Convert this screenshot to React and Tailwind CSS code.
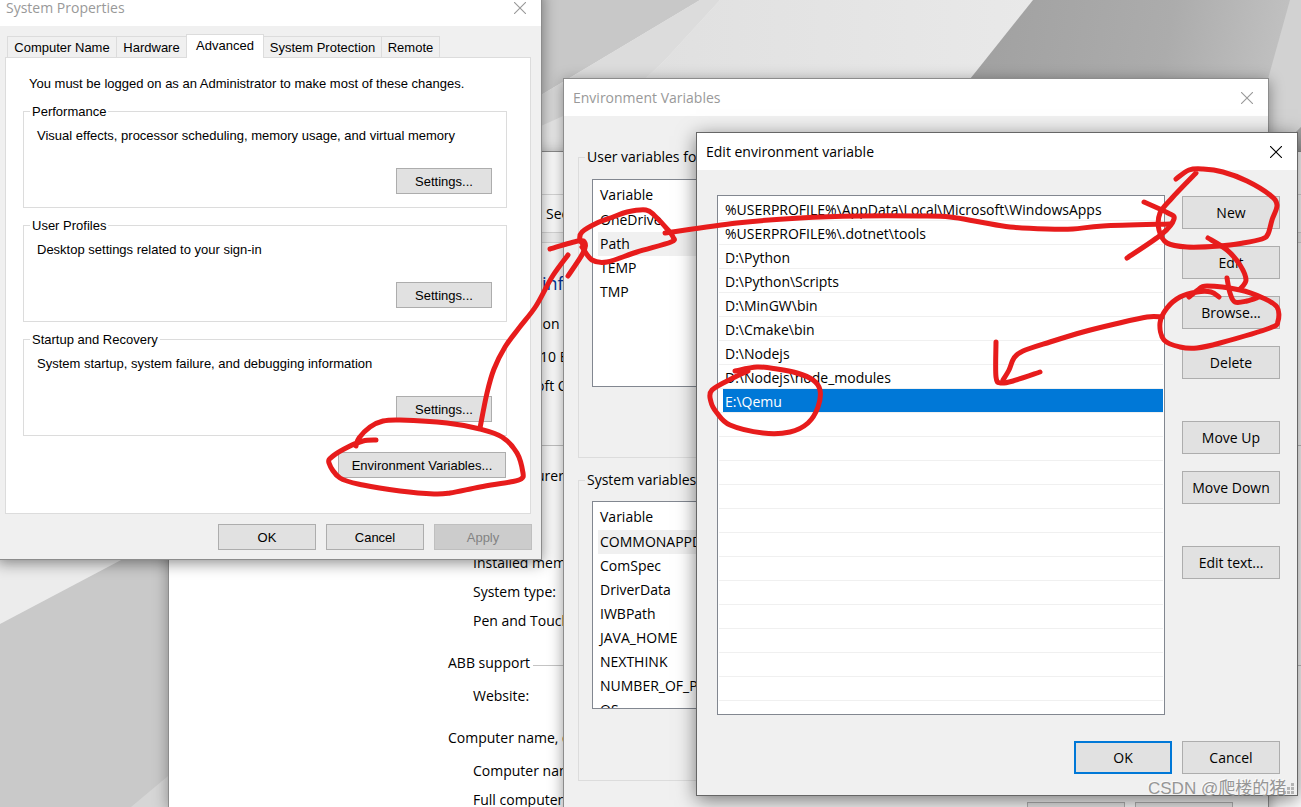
import React from "react";

const SEGOE = "font-['Open_Sans','Noto_Sans_CJK_SC',sans-serif] text-[14px]";

function smooth(points) {
  let d = `M${points[0][0]} ${points[0][1]}`;
  for (let i = 0; i < points.length - 1; i++) {
    const a = points[i - 1] || points[i];
    const b = points[i];
    const c = points[i + 1];
    const e = points[i + 2] || c;
    d += `C${b[0] + (c[0] - a[0]) / 6} ${b[1] + (c[1] - a[1]) / 6} ${c[0] - (e[0] - b[0]) / 6} ${c[1] - (e[1] - b[1]) / 6} ${c[0]} ${c[1]}`;
  }
  return d;
}

const strokes = [
  [[376, 440], [363, 441], [348, 447], [333, 456], [329, 463], [340, 478], [363, 485], [400, 491], [434, 494], [450, 493], [480, 487], [510, 482], [521, 479], [523, 473], [517, 453], [502, 437], [480, 429], [447, 423], [400, 420], [383, 421], [370, 427], [359, 438], [356, 446]],
  [[480, 428], [487, 393], [494, 369], [505, 347], [519, 328], [536, 306], [552, 277], [568, 255]],
  [[550, 249], [578, 241], [585, 243], [583, 253], [568, 276]],
  [[585, 246], [580, 240], [582, 232], [597, 223], [613, 217], [627, 212], [646, 210], [655, 216], [668, 230], [673, 237], [671, 242], [637, 252], [607, 262], [592, 260], [582, 247]],
  [[665, 233], [737, 223], [800, 218], [860, 216], [920, 216], [950, 217], [980, 222], [1010, 227], [1047, 229], [1073, 229], [1103, 226], [1170, 224]],
  [[1144, 202], [1168, 213], [1174, 219], [1162, 234], [1127, 258]],
  [[1176, 179], [1189, 170], [1203, 169], [1223, 172], [1247, 181], [1270, 195], [1277, 205], [1272, 220], [1268, 234], [1262, 239], [1243, 243], [1220, 246], [1187, 247], [1167, 243], [1159, 230], [1160, 213], [1172, 198], [1196, 173]],
  [[1208, 238], [1227, 250], [1240, 265], [1246, 280], [1240, 289]],
  [[1227, 278], [1230, 293], [1235, 302], [1247, 301], [1259, 297]],
  [[1219, 297], [1211, 292], [1197, 292], [1180, 297], [1167, 308], [1160, 323], [1164, 340], [1180, 347], [1197, 348], [1220, 343], [1270, 328], [1278, 321], [1277, 307], [1263, 298], [1240, 290], [1207, 286], [1198, 290], [1189, 297]],
  [[1162, 317], [1147, 317], [1115, 324], [1083, 332], [1050, 342], [1023, 351], [1014, 358], [1009, 370], [1003, 380]],
  [[996, 342], [996, 377], [1001, 383], [1013, 381], [1040, 372]],
  [[735, 371], [757, 367], [777, 369], [797, 373], [813, 380], [820, 390], [818, 407], [808, 423], [790, 432], [763, 433], [730, 425], [717, 413], [711, 402], [712, 390], [735, 377], [748, 371]],
];

function Annotations() {
  return (
    <svg className="pointer-events-none absolute left-0 top-0" width="1301" height="807" viewBox="0 0 1301 807" aria-hidden="true">
      <g fill="none" stroke="#e71c1c" strokeWidth="5" strokeLinecap="round" strokeLinejoin="round">
        {strokes.map((s, i) => (
          <path key={i} d={smooth(s)} />
        ))}
      </g>
    </svg>
  );
}

function Wallpaper() {
  return (
    <svg className="absolute left-0 top-0 h-full w-full" viewBox="0 0 1301 807" preserveAspectRatio="xMinYMin slice" aria-hidden="true">
      <defs>
        <linearGradient id="dark" x1="970" y1="0" x2="1301" y2="60" gradientUnits="userSpaceOnUse">
          <stop offset="0" stopColor="#a0a0a0" />
          <stop offset="0.6" stopColor="#acacac" />
          <stop offset="1" stopColor="#c4c4c4" />
        </linearGradient>
        <linearGradient id="light" x1="650" y1="0" x2="1040" y2="0" gradientUnits="userSpaceOnUse">
          <stop offset="0" stopColor="#e0e0e0" />
          <stop offset="1" stopColor="#e9e9e9" />
        </linearGradient>
      </defs>
      <path d="M0 0H1301V807H0Z" fill="#ececec" />
      <path d="M541 0H700L541 95Z" fill="#c8c8c8" />
      <path d="M700 0H720L665 60L645 79L541 126V95Z" fill="#dcdcdc" />
      <path d="M720 0H1033L970 79H645L665 60Z" fill="url(#light)" />
      <path d="M1033 0H1301V160H1200L970 79Z" fill="url(#dark)" />
      <path d="M1290 0H1301V127L1268 160V79Z" fill="#d2d2d2" />
      <path d="M1301 127V160H1268Z" fill="#a4a4a4" />
      <path d="M0 624L123 559H180V807H0Z" fill="#c9c9c9" />
      <path d="M131 807L180 766V807Z" fill="#d6d6d6" />
    </svg>
  );
}

function TitleBar({ title, active }) {
  return (
    <header className={`flex h-[37px] items-center justify-between bg-white pl-[9px] pr-[15px] ${SEGOE} ${active ? "text-black" : "text-[#999999]"}`}>
      <h2>{title}</h2>
      <button type="button" aria-label={`Close ${title}`} className="flex size-3 items-center justify-center">
        <svg width="12" height="12" viewBox="0 0 12 12" fill="none" stroke="currentColor" strokeWidth="1.1">
          <path d="M0 0L12 12M12 0L0 12" />
        </svg>
      </button>
    </header>
  );
}

function Button({ children, className = "" }) {
  return (
    <button type="button" className={`flex items-center justify-center whitespace-nowrap border border-[#adadad] bg-[#e1e1e1] ${className}`}>
      {children}
    </button>
  );
}

function SettingsGroup({ legend, text }) {
  return (
    <fieldset className="mt-2 h-[106px] border border-[#dcdcdc] pl-[13px] pr-[14px] first-of-type:mt-[9px]">
      <legend className="-ml-[7px] px-[2px] pt-[2px] leading-4">{legend}</legend>
      <p className="mt-[7px] leading-[18px]">{text}</p>
      <Button className="ml-auto mt-[23px] h-[26px] w-24 pt-px">Settings...</Button>
    </fieldset>
  );
}

function SystemProperties() {
  const tab = "border border-b-0 border-[#dcdcdc] whitespace-nowrap pt-px";
  const idle = `${tab} h-[21px] border-l-0`;
  return (
    <section className="absolute -left-[3px] -top-[11px] w-[545px] border-b border-r border-[#8c8c8c] bg-[#f0f0f0] font-['Liberation_Sans',Arial,sans-serif] text-[13px] text-black shadow-[0_3px_14px_rgba(0,0,0,0.45)]">
      <TitleBar title="System Properties" />
      <div className="px-2 pb-[9px] pt-2">
        <div role="tablist" className="flex items-end pl-[2px]">
          <button type="button" role="tab" className={`${tab} h-[21px] w-[110px]`}>Computer Name</button>
          <button type="button" role="tab" className={`${idle} w-[69px] border-r-0`}>Hardware</button>
          <button type="button" role="tab" aria-selected="true" className={`${tab} -mb-px h-6 w-[78px] bg-white pb-[3px]`}>Advanced</button>
          <button type="button" role="tab" className={`${idle} w-[118px]`}>System Protection</button>
          <button type="button" role="tab" className={`${idle} w-[58px]`}>Remote</button>
        </div>
        <div role="tabpanel" className="h-[457px] w-[526px] border border-[#dcdcdc] bg-white pl-[17px] pr-[23px] pt-[17px]">
          <p className="pl-[6px] leading-[18px]">You must be logged on as an Administrator to make most of these changes.</p>
          <SettingsGroup legend="Performance" text="Visual effects, processor scheduling, memory usage, and virtual memory" />
          <SettingsGroup legend="User Profiles" text="Desktop settings related to your sign-in" />
          <SettingsGroup legend="Startup and Recovery" text="System startup, system failure, and debugging information" />
          <Button className="ml-auto mr-px mt-4 h-[26px] w-[168px] pt-px">Environment Variables...</Button>
        </div>
        <div className="mt-[10px] flex justify-end gap-[10px] pr-px">
          <Button className="h-[26px] w-[98px] pt-px">OK</Button>
          <Button className="h-[26px] w-[98px] pt-px">Cancel</Button>
          <button type="button" disabled className="h-[26px] w-[98px] border border-[#bfbfbf] bg-[#cccccc] pt-px text-[#838383]">Apply</button>
        </div>
      </div>
    </section>
  );
}

function SystemWindow() {
  return (
    <section className={`absolute left-[168px] right-0 top-[151px] h-[656px] overflow-hidden border-l border-t border-[#8c8c8c] bg-white leading-5 text-black shadow-[0_3px_14px_rgba(0,0,0,0.35)] ${SEGOE}`}>
      <div className="h-[43px] border-b border-[#d9d9d9] bg-white" />
      <div className="flex h-[38px] items-center border-b border-[#d9d9d9] pl-[377px]">See</div>
      <div className="h-[10px] border-b border-[#d9d9d9] bg-[#f5f5f5]" />
      <p className="mt-[30px] pl-[373px] text-[18px] text-[#003399]">inf</p>
      <p className="mt-[21px] pl-[370px]">ion</p>
      <p className="mt-[13px] pl-[371px]">10 E</p>
      <p className="mt-[9px] pl-[367px]">oft C</p>
      <div className="mt-[49px] border-b border-[#c4c4c4]" />
      <p className="mt-5 pl-[367px]">urer:</p>
      <div className="mt-[67px] flex flex-col gap-[9px] pl-[304px]">
        <p>Installed mem</p>
        <p>System type:</p>
        <p>Pen and Touch</p>
      </div>
      <div className="mt-[22px] flex items-center gap-[3px] pl-[279px]">
        <h3>ABB support</h3>
        <div className="grow border-b border-[#c4c4c4] pt-1" />
      </div>
      <p className="mt-[13px] pl-[304px]">Website:</p>
      <h3 className="mt-[22px] pl-[279px]">Computer name, d</h3>
      <p className="mt-[13px] pl-[304px]">Computer nam</p>
      <p className="mt-[9px] pl-[304px]">Full computer</p>
    </section>
  );
}

function VariableTable({ names, selected }) {
  return (
    <div className="h-[208px] overflow-hidden border border-[#828790] bg-white pl-[5px] pt-[3px]">
      <table className="w-full border-collapse text-left">
        <thead>
          <tr className="h-[25px]">
            <th scope="col" className="pb-px pl-[2px] font-normal">Variable</th>
          </tr>
        </thead>
        <tbody>
          {names.map((name) => (
            <tr key={name} className={`h-6 ${name === selected ? "bg-[#f0f0f0]" : ""}`}>
              <td className="pl-[2px]">{name}</td>
            </tr>
          ))}
        </tbody>
      </table>
    </div>
  );
}

function EnvironmentVariables() {
  return (
    <section className={`absolute left-[563px] top-[78px] h-[771px] w-[706px] border border-[#8c8c8c] bg-[#f0f0f0] leading-5 text-black shadow-[0_3px_14px_rgba(0,0,0,0.4)] ${SEGOE}`}>
      <TitleBar title="Environment Variables" />
      <div className="px-[14px] pt-[31px]">
        <fieldset className="h-[311px] border border-[#dcdcdc] px-[13px]">
          <legend className="-ml-[7px] px-[2px]">User variables for</legend>
          <div className="pt-3">
            <VariableTable names={["OneDrive", "Path", "TEMP", "TMP"]} selected="Path" />
          </div>
        </fieldset>
        <fieldset className="mt-3 h-[311px] border border-[#dcdcdc] px-[13px]">
          <legend className="-ml-[7px] px-[2px]">System variables</legend>
          <div className="pt-[11px]">
            <VariableTable
              names={["COMMONAPPDATA", "ComSpec", "DriverData", "IWBPath", "JAVA_HOME", "NEXTHINK", "NUMBER_OF_PROCESSORS", "OS"]}
              selected="COMMONAPPDATA"
            />
          </div>
        </fieldset>
        <div className="mt-[21px] flex justify-end gap-[10px] pr-[21px]">
          <Button className="h-[33px] w-[98px]">OK</Button>
          <Button className="h-[33px] w-[98px]">Cancel</Button>
        </div>
      </div>
    </section>
  );
}

const paths = [
  "%USERPROFILE%\\AppData\\Local\\Microsoft\\WindowsApps",
  "%USERPROFILE%\\.dotnet\\tools",
  "D:\\Python",
  "D:\\Python\\Scripts",
  "D:\\MinGW\\bin",
  "D:\\Cmake\\bin",
  "D:\\Nodejs",
  "D:\\Nodejs\\node_modules",
  "E:\\Qemu",
];

function EditVariable() {
  const btn = "h-[33px] w-[98px]";
  return (
    <section className={`absolute left-[696px] top-[132px] w-[602px] border border-[#666666] bg-[#f0f0f0] leading-5 text-black shadow-[0_4px_18px_rgba(0,0,0,0.5)] ${SEGOE}`}>
      <TitleBar title="Edit environment variable" active />
      <div className="flex justify-between pl-5 pr-[17px] pt-[25px]">
        <ul className="h-[520px] w-[448px] overflow-hidden border border-[#828790] bg-white px-px pt-px">
          {paths.map((p) => (
            <li key={p} className="h-6 border-b border-[#f0f0f0] pl-1">
              <span className={`flex h-full items-center pl-[2px] pt-[2px] ${p === "E:\\Qemu" ? "bg-[#0078d7] text-white" : ""}`}>{p}</span>
            </li>
          ))}
          {Array.from({ length: 12 }, (_, i) => (
            <li key={i} className="h-6 border-b border-[#f0f0f0]" />
          ))}
        </ul>
        <div className="flex flex-col gap-[17px] pt-px">
          <Button className={btn}>New</Button>
          <Button className={btn}>Edit</Button>
          <Button className={btn}>Browse...</Button>
          <Button className={btn}>Delete</Button>
          <Button className={`${btn} mt-[25px]`}>Move Up</Button>
          <Button className={btn}>Move Down</Button>
          <Button className={`${btn} mt-[25px]`}>Edit text...</Button>
        </div>
      </div>
      <div className="mt-[26px] flex justify-end gap-[10px] pb-[21px] pr-[17px]">
        <button type="button" className={`${btn} border-2 border-[#0078d7] bg-[#e1e1e1]`}>OK</button>
        <Button className={btn}>Cancel</Button>
      </div>
      <svg className="absolute bottom-[1px] right-[3px]" width="11" height="11" viewBox="0 0 11 11" fill="#b4b4b4" aria-hidden="true">
        <path d="M8 0h3v3h-3zM4 4h3v3h-3zM8 4h3v3h-3zM0 8h3v3h-3zM4 8h3v3h-3zM8 8h3v3h-3z" />
      </svg>
    </section>
  );
}

export default function App() {
  return (
    <main className="relative min-h-screen overflow-hidden bg-[#ececec]">
      <Wallpaper />
      <SystemWindow />
      <EnvironmentVariables />
      <SystemProperties />
      <EditVariable />
      <Annotations />
      <p className="absolute left-[1148px] top-[777px] whitespace-nowrap font-['Liberation_Sans','Noto_Sans_CJK_SC',sans-serif] text-[17px] leading-6 text-[#969696] [text-shadow:-1px_-1px_0_rgba(255,255,255,0.7)]">
        CSDN @爬楼的猪
      </p>
    </main>
  );
}
